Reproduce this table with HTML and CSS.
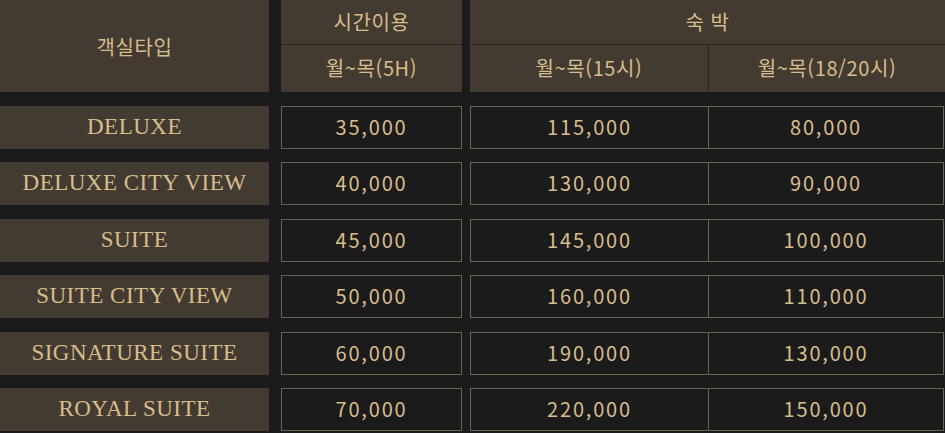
FILE: index.html
```html
<!DOCTYPE html>
<html lang="ko">
<head>
    <meta charset="UTF-8">
    <title>객실요금</title>
    <link rel="stylesheet" href="styles.css">
</head>
<body>
    <div id="price">
        <div class="head">
            <div class="h-type">객실타입</div>
            <div class="h-time">
                <div class="h-top">시간이용</div>
                <div class="h-sub">월~목(5H)</div>
            </div>
            <div class="h-stay">
                <div class="h-top">숙 박</div>
                <div class="h-sub">
                    <span>월~목(15시)</span>
                    <span>월~목(18/20시)</span>
                </div>
            </div>
        </div>

        <ul class="rows">
            <li>
                <div class="name">DELUXE</div>
                <div class="time">35,000</div>
                <div class="stay"><span>115,000</span><span>80,000</span></div>
            </li>
            <li>
                <div class="name">DELUXE CITY VIEW</div>
                <div class="time">40,000</div>
                <div class="stay"><span>130,000</span><span>90,000</span></div>
            </li>
            <li>
                <div class="name">SUITE</div>
                <div class="time">45,000</div>
                <div class="stay"><span>145,000</span><span>100,000</span></div>
            </li>
            <li>
                <div class="name">SUITE CITY VIEW</div>
                <div class="time">50,000</div>
                <div class="stay"><span>160,000</span><span>110,000</span></div>
            </li>
            <li>
                <div class="name">SIGNATURE SUITE</div>
                <div class="time">60,000</div>
                <div class="stay"><span>190,000</span><span>130,000</span></div>
            </li>
            <li>
                <div class="name">ROYAL SUITE</div>
                <div class="time">70,000</div>
                <div class="stay"><span>220,000</span><span>150,000</span></div>
            </li>
        </ul>
    </div>
</body>
</html>
```

FILE: styles.css
```css
*{margin: 0;padding: 0;box-sizing: border-box;}
ul,li{list-style: none;}
body{background: #1b1b1b;color: #d8bd8c;font-family: "Noto Sans CJK KR", "Noto Sans", sans-serif;font-size: 20px;}
#price{width: 945px;}

/* 표 머리 */
.head{display: flex;height: 92px;letter-spacing: 0.6px;}
.h-type{width: 269px;background: #433b31;display: flex;align-items: center;justify-content: center;}
.h-time{width: 181px;margin-left: 12px;display: flex;flex-direction: column;}
.h-stay{flex: 1;margin-left: 8px;display: flex;flex-direction: column;}
.h-top{height: 45px;background: #433b31;border-bottom: 1px solid #2a2722;display: flex;align-items: center;justify-content: center;padding-bottom: 2px;}
.h-sub{flex: 1;background: #433b31;display: flex;align-items: center;justify-content: center;padding-bottom: 2px;}
.h-stay .h-sub{align-items: stretch;padding-bottom: 0;}
.h-stay .h-sub span{display: flex;align-items: center;justify-content: center;padding-bottom: 2px;}
.h-stay .h-sub span:nth-child(1){width: 239px;border-right: 1px solid #2a2722;}
.h-stay .h-sub span:nth-child(2){flex: 1;}

/* 요금 */
.rows{padding-top: 14px;}
.rows li{display: flex;height: 43px;margin-bottom: 13.4px;}
.rows .name{width: 269px;background: #433b31;display: flex;align-items: center;justify-content: center;font-family: "Liberation Serif", serif;font-size: 23px;letter-spacing: 0.5px;padding-bottom: 1px;}
.rows .time,.rows .stay span{display: flex;align-items: center;justify-content: center;font-size: 20px;letter-spacing: 1.8px;padding-bottom: 2px;}
.rows .time{width: 181px;margin-left: 12px;border: 1px solid #6e624f;}
.rows .stay{width: 474px;margin-left: 8px;border: 1px solid #6e624f;display: flex;}
.rows .stay span:nth-child(1){width: 238px;border-right: 1px solid #6e624f;}
.rows .stay span:nth-child(2){flex: 1;}
```
